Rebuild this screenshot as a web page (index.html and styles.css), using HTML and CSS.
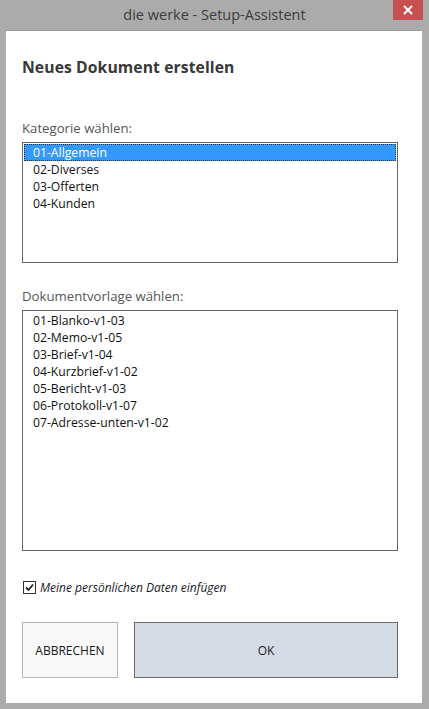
FILE: index.html
```html
<!DOCTYPE html>
<html lang="de">
<head>
<meta charset="utf-8">
<title>die werke - Setup-Assistent</title>
<link rel="stylesheet" href="styles.css">
</head>
<body>
<div class="window">
  <div class="titlebar">
    <span class="title">die werke - Setup-Assistent</span>
    <div class="close">
      <svg width="10" height="10" viewBox="0 0 10 10"><path d="M1 1L9 9M9 1L1 9" stroke="#fff" stroke-width="2"/></svg>
    </div>
  </div>
  <div class="client">
    <h1 class="heading">Neues Dokument erstellen</h1>
    <div class="label label-cat">Kategorie wählen:</div>
    <div class="listbox list-cat">
      <div class="item selected">01-Allgemein</div>
      <div class="item">02-Diverses</div>
      <div class="item">03-Offerten</div>
      <div class="item">04-Kunden</div>
    </div>
    <div class="label label-doc">Dokumentvorlage wählen:</div>
    <div class="listbox list-doc">
      <div class="item">01-Blanko-v1-03</div>
      <div class="item">02-Memo-v1-05</div>
      <div class="item">03-Brief-v1-04</div>
      <div class="item">04-Kurzbrief-v1-02</div>
      <div class="item">05-Bericht-v1-03</div>
      <div class="item">06-Protokoll-v1-07</div>
      <div class="item">07-Adresse-unten-v1-02</div>
    </div>
    <label class="check">
      <span class="box">
        <svg width="9" height="9" viewBox="0 0 9 9"><path d="M1 4.5L3.5 7L8 1.5" fill="none" stroke="#222" stroke-width="1.8"/></svg>
      </span>
      <span class="check-text">Meine persönlichen Daten einfügen</span>
    </label>
    <div class="buttons">
      <div class="btn btn-cancel">ABBRECHEN</div>
      <div class="btn btn-ok">OK</div>
    </div>
  </div>
</div>
</body>
</html>
```
FILE: styles.css
```css
html, body {
  margin: 0;
  padding: 0;
}
body {
  background: #ababab;
  font-family: "Open Sans", "Noto Sans", sans-serif;
  width: 429px;
  height: 709px;
  overflow: hidden;
}
.window {
  display: flex;
  flex-direction: column;
  height: 709px;
}
.titlebar {
  height: 30px;
  display: flex;
  align-items: center;
  justify-content: center;
  position: relative;
}
.title {
  font-size: 14.5px;
  color: #3b3b3b;
  margin-top: -1px;
}
.close {
  position: absolute;
  top: 0;
  right: 6px;
  width: 30px;
  height: 20px;
  background: #c75050;
  display: flex;
  align-items: center;
  justify-content: center;
}
.client {
  margin: 0 7px 0 6px;
  height: 673px;
  background: #fff;
  box-sizing: border-box;
  padding: 0 0 0 16px;
  display: flex;
  flex-direction: column;
  border-top: 1px solid #9a9a9a;
}
.heading {
  font-size: 15.7px;
  font-weight: bold;
  color: #383838;
  margin: 26px 0 0 0;
  line-height: 20px;
  letter-spacing: 0.1px;
}
.label {
  font-size: 13.2px;
  color: #555;
  line-height: 16px;
}
.label-cat {
  margin-top: 43px;
}
.label-doc {
  margin-top: 25px;
}
.listbox {
  width: 376px;
  box-sizing: border-box;
  border: 1px solid #666;
  background: #fff;
  padding: 1px 1px;
  margin-top: 6px;
}
.list-cat {
  height: 121px;
}
.list-doc {
  height: 241px;
  margin-top: 6px;
}
.item {
  font-size: 12.2px;
  color: #111;
  line-height: 17px;
  height: 17px;
  padding-left: 9px;
  box-sizing: border-box;
}
.item.selected {
  background: #3399ff;
  color: #fff;
  outline: 1px dotted #333;
  outline-offset: -1px;
}
.check {
  display: flex;
  align-items: center;
  margin-top: 29px;
  height: 14px;
}
.box {
  width: 13px;
  height: 13px;
  box-sizing: border-box;
  border: 1px solid #333;
  background: #fff;
  display: flex;
  align-items: center;
  justify-content: center;
  margin-left: 1px;
}
.check-text {
  font-size: 12px;
  font-style: italic;
  color: #1a1a2a;
  margin-left: 4px;
}
.buttons {
  display: flex;
  gap: 16px;
  margin-top: 28px;
}
.btn {
  height: 56px;
  box-sizing: border-box;
  display: flex;
  align-items: center;
  justify-content: center;
  font-size: 12px;
  color: #1a1a1a;
}
.btn-cancel {
  width: 96px;
  background: #f8f8f8;
  border: 1px solid #b5b5b5;
}
.btn-ok {
  width: 264px;
  background: #d5dce6;
  border: 1px solid #6a6a6a;
}
```
